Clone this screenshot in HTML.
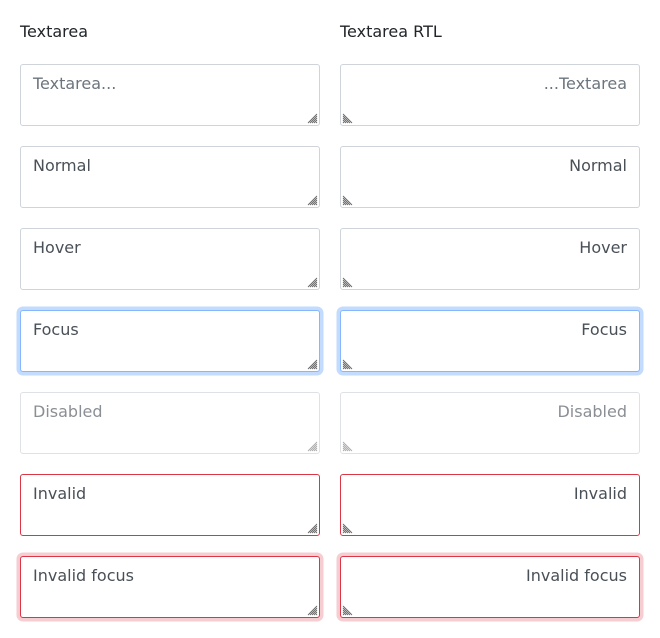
<!DOCTYPE html>
<html><head><style>
body{margin:0;background:#fff;font-family:"DejaVu Sans",sans-serif;width:660px;height:638px;position:relative;overflow:hidden}
.t{position:absolute;top:22px;font-size:16px;color:#212529}
.b{position:absolute;width:298px;height:60px;border:1px solid #ced4da;border-radius:3px;box-sizing:content-box;font-size:16px;color:#495057;background:#fff}
.b span{position:absolute;top:9px}
.l span{left:12px}.r span{right:12px}
.g{position:absolute;bottom:1px;width:12px;height:12px}
.l .g{right:1px}.r .g{left:1px;transform:scaleX(-1)}
.f{border-color:#86b7fe;box-shadow:0 0 0 3.5px #c2dbfe}
.d{border-color:#dee2e6;color:#8a8f95}
.i{border-color:#dc3545}
.if{border-color:#dc3545;box-shadow:0 0 0 3.5px #f6cdd1}
</style></head><body>
<div class="t" style="left:20px">Textarea</div>
<div class="t" style="left:340px">Textarea RTL</div>
<div class="b l" style="left:20px;top:64px;color:#6c757d"><span>Textarea...</span><svg class="g" viewBox="0 0 12 12"><path d="M11 2L2 11M11 4L4 11M11 6L6 11M11 8L8 11M11 10L10 11" stroke="#666" stroke-width="0.9"/></svg></div>
<div class="b r" style="left:340px;top:64px;color:#6c757d"><span>...Textarea</span><svg class="g" viewBox="0 0 12 12"><path d="M11 2L2 11M11 4L4 11M11 6L6 11M11 8L8 11M11 10L10 11" stroke="#666" stroke-width="0.9"/></svg></div>
<div class="b l" style="left:20px;top:146px"><span>Normal</span><svg class="g" viewBox="0 0 12 12"><path d="M11 2L2 11M11 4L4 11M11 6L6 11M11 8L8 11M11 10L10 11" stroke="#666" stroke-width="0.9"/></svg></div>
<div class="b r" style="left:340px;top:146px"><span>Normal</span><svg class="g" viewBox="0 0 12 12"><path d="M11 2L2 11M11 4L4 11M11 6L6 11M11 8L8 11M11 10L10 11" stroke="#666" stroke-width="0.9"/></svg></div>
<div class="b l" style="left:20px;top:228px"><span>Hover</span><svg class="g" viewBox="0 0 12 12"><path d="M11 2L2 11M11 4L4 11M11 6L6 11M11 8L8 11M11 10L10 11" stroke="#666" stroke-width="0.9"/></svg></div>
<div class="b r" style="left:340px;top:228px"><span>Hover</span><svg class="g" viewBox="0 0 12 12"><path d="M11 2L2 11M11 4L4 11M11 6L6 11M11 8L8 11M11 10L10 11" stroke="#666" stroke-width="0.9"/></svg></div>
<div class="b l f" style="left:20px;top:310px"><span>Focus</span><svg class="g" viewBox="0 0 12 12"><path d="M11 2L2 11M11 4L4 11M11 6L6 11M11 8L8 11M11 10L10 11" stroke="#666" stroke-width="0.9"/></svg></div>
<div class="b r f" style="left:340px;top:310px"><span>Focus</span><svg class="g" viewBox="0 0 12 12"><path d="M11 2L2 11M11 4L4 11M11 6L6 11M11 8L8 11M11 10L10 11" stroke="#666" stroke-width="0.9"/></svg></div>
<div class="b l d" style="left:20px;top:392px"><span>Disabled</span><svg class="g" viewBox="0 0 12 12"><path d="M11 2L2 11M11 4L4 11M11 6L6 11M11 8L8 11M11 10L10 11" stroke="#aaa" stroke-width="0.9"/></svg></div>
<div class="b r d" style="left:340px;top:392px"><span>Disabled</span><svg class="g" viewBox="0 0 12 12"><path d="M11 2L2 11M11 4L4 11M11 6L6 11M11 8L8 11M11 10L10 11" stroke="#aaa" stroke-width="0.9"/></svg></div>
<div class="b l i" style="left:20px;top:474px"><span>Invalid</span><svg class="g" viewBox="0 0 12 12"><path d="M11 2L2 11M11 4L4 11M11 6L6 11M11 8L8 11M11 10L10 11" stroke="#666" stroke-width="0.9"/></svg></div>
<div class="b r i" style="left:340px;top:474px"><span>Invalid</span><svg class="g" viewBox="0 0 12 12"><path d="M11 2L2 11M11 4L4 11M11 6L6 11M11 8L8 11M11 10L10 11" stroke="#666" stroke-width="0.9"/></svg></div>
<div class="b l if" style="left:20px;top:556px"><span>Invalid focus</span><svg class="g" viewBox="0 0 12 12"><path d="M11 2L2 11M11 4L4 11M11 6L6 11M11 8L8 11M11 10L10 11" stroke="#666" stroke-width="0.9"/></svg></div>
<div class="b r if" style="left:340px;top:556px"><span>Invalid focus</span><svg class="g" viewBox="0 0 12 12"><path d="M11 2L2 11M11 4L4 11M11 6L6 11M11 8L8 11M11 10L10 11" stroke="#666" stroke-width="0.9"/></svg></div>
</body></html>
